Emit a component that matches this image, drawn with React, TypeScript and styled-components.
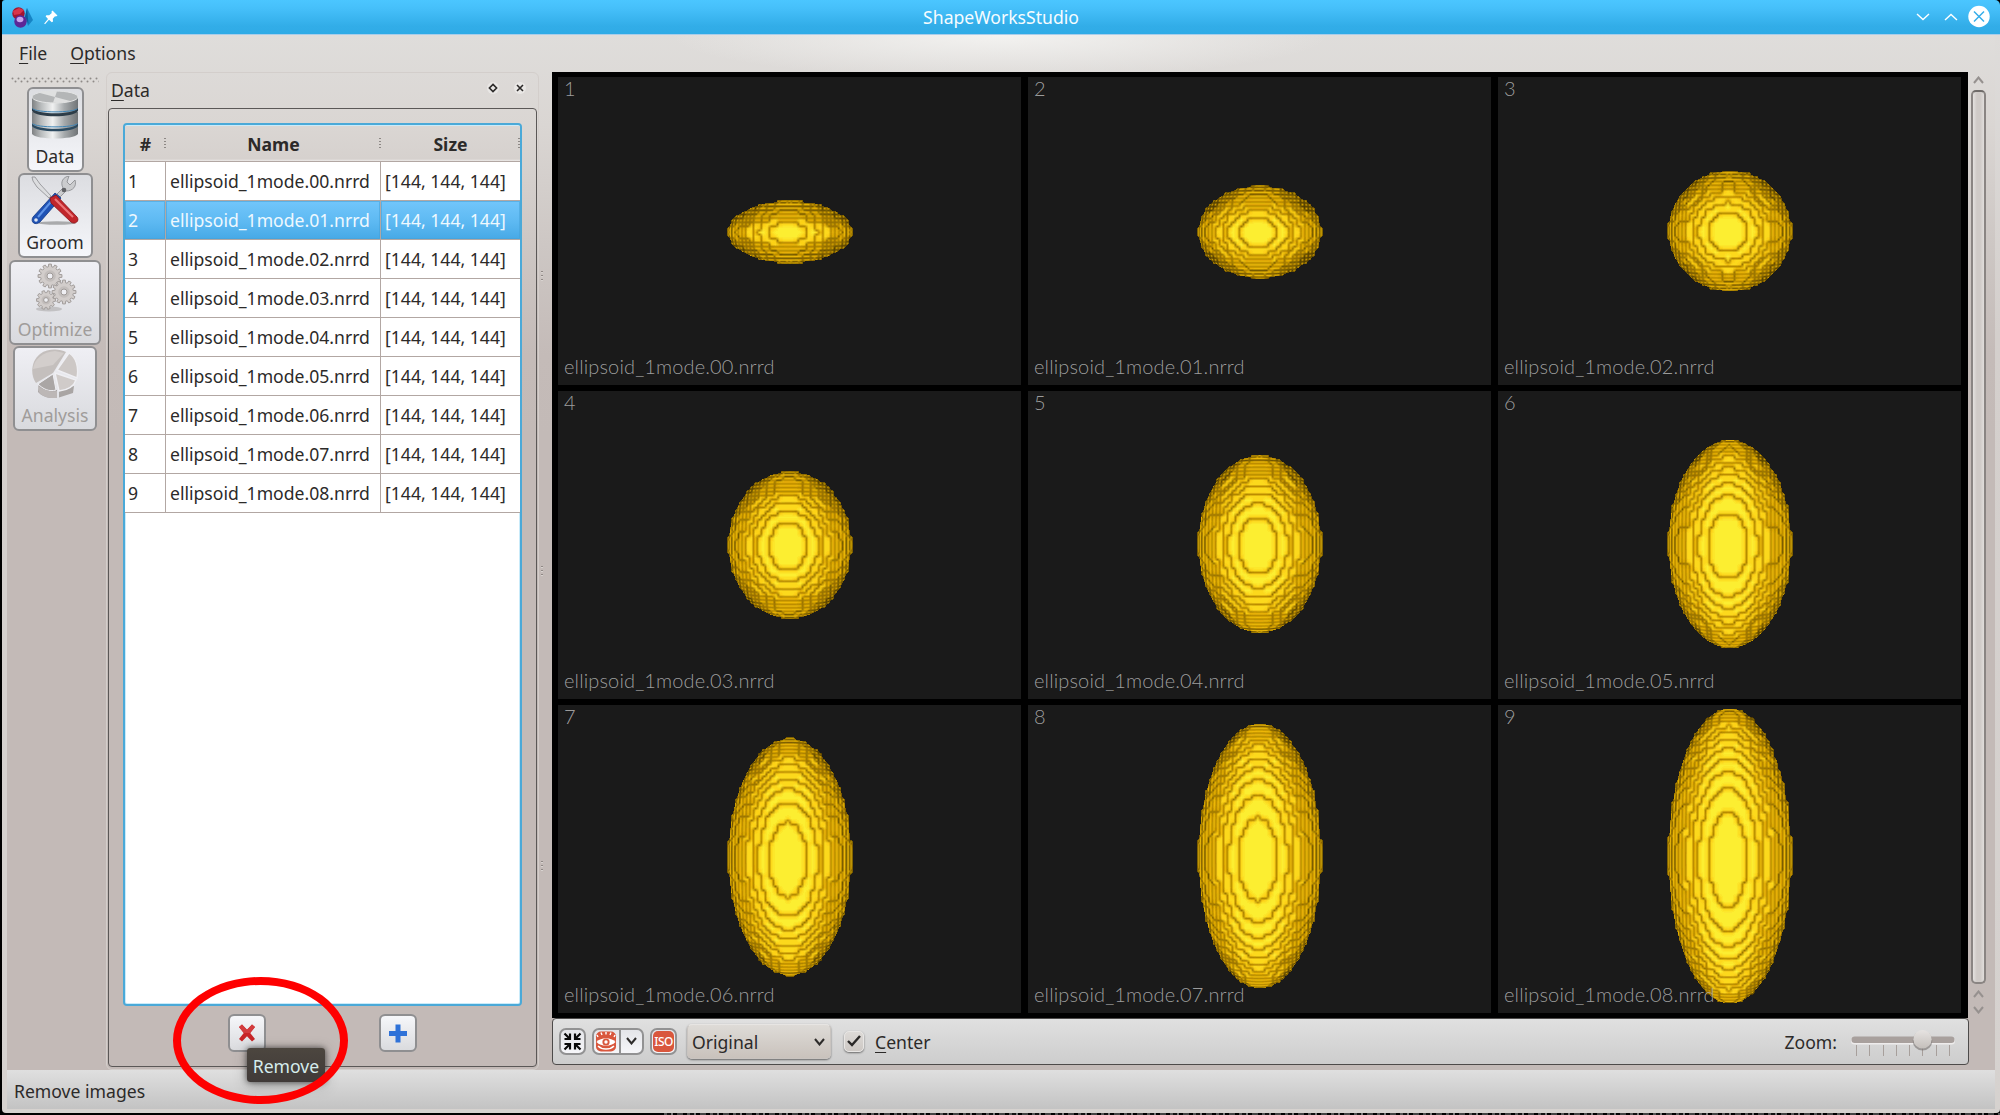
import React from "react";
import styled, { createGlobalStyle } from "styled-components";

const Global = createGlobalStyle`
  * { box-sizing: border-box; }
  html, body { margin: 0; padding: 0; background: #000; }
  body { width: 2000px; height: 1115px; overflow: hidden; font-family: "Noto Sans", "Open Sans", sans-serif; font-size: 17.6px; color: #2c2a29; }
`;

/* ---------- voxel ellipsoid rendering ---------- */

const RADIUS = 16.15;
const Z_OFFSET = 0.45;
const VOXEL = 3.8;

type RGB = [number, number, number];

function shade(gx: number, gy: number, gz: number): RGB {
  const len = Math.hypot(gx, gy, gz) || 1;
  const nz = Math.max(0.25, gz / len);
  const spec = Math.pow(Math.max(0, 2 * nz * nz - 1), 5);
  return [Math.min(255, 260 * nz), Math.min(255, 196 * nz + 43 * spec), 50 * spec];
}

function voxelPaths(b: number, lift: number) {
  const inside = (i: number, j: number, k: number) => {
    const z = k + Z_OFFSET;
    return (i * i + z * z) / (RADIUS * RADIUS) + (j * j) / (b * b) <= 1 ? 1 : 0;
  };
  const W = 19;
  const H = Math.ceil(b) + 3;
  const cols = 2 * W + 1;
  const heights: number[] = [];
  for (let j = -H; j <= H; j++) {
    for (let i = -W; i <= W; i++) {
      let k = 18;
      while (k > -3 && !inside(i, j, k)) k--;
      heights.push(k > -3 ? k : -99);
    }
  }
  const hAt = (i: number, j: number) =>
    Math.abs(i) > W || Math.abs(j) > H ? -99 : heights[(j + H) * cols + i + W];
  const grad = (i: number, j: number, k: number): RGB => [
    inside(i - 1, j, k) - inside(i + 1, j, k),
    inside(i, j - 1, k) - inside(i, j + 1, k),
    inside(i, j, k - 1) - inside(i, j, k + 1),
  ];
  const mix = (p: RGB, q: RGB, side = 1): RGB =>
    shade((p[0] + q[0]) * side, (p[1] + q[1]) * side, p[2] + q[2]);
  const avg = (list: RGB[]): RGB => {
    const s: RGB = [0, 0, 0];
    list.forEach((c) => { s[0] += c[0]; s[1] += c[1]; s[2] += c[2]; });
    return [s[0] / list.length, s[1] / list.length, s[2] / list.length];
  };
  const top = (i: number, j: number): RGB | null => {
    const h = hAt(i, j);
    return h < -50 ? null : mix(grad(i, j, h), grad(i, j, h + 1), 0.46);
  };
  const edge = (i: number, j: number, i2: number, j2: number): RGB | null => {
    const a = hAt(i, j);
    const c = hAt(i2, j2);
    if (a < -50 && c < -50) return null;
    if (a === c) return avg([top(i, j)!, top(i2, j2)!]);
    const hi = Math.max(a, c);
    const lo = Math.min(a, c);
    const upper = mix(grad(i, j, hi), grad(i2, j2, hi));
    if (lo < -50) return upper;
    return avg([upper, mix(grad(i, j, lo + 1), grad(i2, j2, lo + 1))]);
  };
  // middle of a cell: keeps straight steps solid and cuts lone corners diagonally
  const center = (i: number, j: number): RGB | null => {
    const sides: number[][] = [
      [i, j, i + 1, j], [i, j + 1, i + 1, j + 1], [i, j, i, j + 1], [i + 1, j, i + 1, j + 1],
    ];
    const stepped = sides.filter(([a, c, d, e]) => hAt(a, c) !== hAt(d, e));
    const pick = (list: number[][]) => list.map(([a, c, d, e]) => edge(a, c, d, e)).filter(Boolean) as RGB[];
    const dark = pick(stepped);
    const flat = pick(sides.filter((s) => !stepped.includes(s)));
    if (!dark.length) return flat.length ? avg(flat) : null;
    if (!flat.length) return avg(dark);
    const parallel = stepped.length === 2 &&
      (hAt(i, j) === hAt(i + 1, j)) === (hAt(i, j + 1) === hAt(i + 1, j + 1));
    return parallel ? avg(dark) : avg([avg(dark), avg(flat)]);
  };
  // node grid at half-voxel resolution
  const cache = new Map<number, RGB | null>();
  const node = (u: number, v: number): RGB | null => {
    const key = (v + 400) * 1000 + u + 400;
    if (cache.has(key)) return cache.get(key)!;
    const i = Math.floor(u / 2);
    const j = Math.floor(v / 2);
    const ox = u - 2 * i;
    const oy = v - 2 * j;
    let r: RGB | null;
    if (!ox && !oy) r = top(i, j);
    else if (!oy) r = edge(i, j, i + 1, j);
    else if (!ox) r = edge(i, j, i, j + 1);
    else r = center(i, j);
    cache.set(key, r);
    return r;
  };

  const halfH = Math.ceil((b + 2) * VOXEL);
  const paths = new Map<string, string>();
  for (let y = -halfH; y <= halfH; y++) {
    let runKey = "";
    let runStart = 0;
    for (let x = -68; x <= 68; x++) {
      let key = "";
      if (x < 68) {
        let z = 0;
        let u = 0;
        let v = 0;
        for (let n = 0; n < 5; n++) {
          const s = VOXEL * (1 + 0.09 * z);
          u = (x + 0.5 + 2.2 * z) / s;
          v = (y + 0.5 - lift * z) / s;
          z = Math.sqrt(Math.max(0, 1 - (u * u) / (RADIUS * RADIUS) - (v * v) / (b * b)));
        }
        const i = Math.floor(u);
        const j = Math.floor(v);
        const fx = u - i;
        const fy = v - j;
        const on = (p: number, q: number) => (hAt(p, q) > -50 ? 1 : 0);
        const cover =
          on(i, j) * (1 - fx) * (1 - fy) + on(i + 1, j) * fx * (1 - fy) +
          on(i, j + 1) * (1 - fx) * fy + on(i + 1, j + 1) * fx * fy;
        if (cover > 0.5) {
          const U = Math.floor(u * 2);
          const V = Math.floor(v * 2);
          const tx = u * 2 - U;
          const ty = v * 2 - V;
          const acc: RGB = [0, 0, 0];
          let wsum = 0;
          ([[0, 0, (1 - tx) * (1 - ty)], [1, 0, tx * (1 - ty)], [0, 1, (1 - tx) * ty], [1, 1, tx * ty]] as RGB[])
            .forEach(([dx, dy, w]) => {
              const c = node(U + dx, V + dy);
              if (c) {
                acc[0] += c[0] * w; acc[1] += c[1] * w; acc[2] += c[2] * w;
                wsum += w;
              }
            });
          const q = (n: number) => Math.min(255, Math.round(n / (wsum || 1) / 7) * 7);
          key = `rgb(${q(acc[0])},${q(acc[1])},${q(acc[2])})`;
        }
      }
      if (key !== runKey) {
        if (runKey) {
          paths.set(runKey, (paths.get(runKey) || "") + `M${runStart} ${y}h${x - runStart}v1h${runStart - x}z`);
        }
        runKey = key;
        runStart = x;
      }
    }
  }
  return Array.from(paths.entries());
}

const Scene = styled.svg`
  display: block;
  width: 100%;
  height: 100%;
  shape-rendering: crispEdges;
`;

const Ellipsoid = ({ b, lift, cy }: { b: number; lift: number; cy: number }) => {
  const paths = React.useMemo(() => voxelPaths(b, lift), [b, lift]);
  return (
    <Scene viewBox="0 0 463 308">
      <g transform={`translate(232 ${cy})`}>
        {paths.map(([fill, d]) => <path key={fill} d={d} fill={fill} />)}
      </g>
    </Scene>
  );
};

/* ---------- window frame ---------- */

const Window = styled.div`
  width: 2000px;
  height: 1115px;
  padding-left: 2px;
  display: flex;
  flex-direction: column;
  position: relative;
  overflow: hidden;
`;
const TitleBar = styled.header`
  height: 35px;
  flex: none;
  display: grid;
  grid-template-columns: 120px 1fr 120px;
  align-items: center;
  background: linear-gradient(#4bc6ff 0, #46c0fa 8px, #32ade8 26px, #2fabe6 34px);
  border-bottom: 1px solid #a9cdea;
  border-radius: 3px 5px 0 0;
`;
const TitleIcons = styled.div`
  display: flex;
  align-items: center;
  gap: 11px;
  padding-left: 10px;
  svg { display: block; }
`;
const Title = styled.div`
  color: #f6fcff;
  text-align: center;
  line-height: 34px;
`;
const WindowButtons = styled.div`
  display: flex;
  justify-content: flex-end;
  align-items: center;
  padding-right: 9px;
`;
const Frame = styled.div`
  flex: none;
  height: 1078px;
  padding: 0 5px 4px;
  background: linear-gradient(#dedcda, #d4cfcc 300px, #d6d2cf);
  border-radius: 0 0 4px 4px;
`;
const Body = styled.div`
  height: 1074px;
  display: flex;
  flex-direction: column;
  background:
    radial-gradient(ellipse 330px 44px at 993px 0, #f3f2f0 0, rgba(240,239,237,.75) 35%, rgba(226,224,222,0) 100%),
    linear-gradient(#dfdddb 0, #dad6d3 90px, #cdc7c4 210px, #c4bbb8 320px, #c3bab7 400px);
`;
const MenuBar = styled.nav`
  height: 37px;
  flex: none;
  display: flex;
  gap: 23px;
  padding: 7px 0 0 12px;
  line-height: 23px;
`;
const Mnemonic = styled.span`
  text-decoration: underline;
  text-decoration-thickness: 1px;
  text-underline-offset: 3px;
`;
const Main = styled.div`
  height: 998px;
  flex: none;
  display: flex;
`;

/* ---------- left tool bar ---------- */

const ToolColumn = styled.aside`
  width: 99px;
  flex: none;
  display: flex;
  flex-direction: column;
  align-items: center;
  padding: 5px 3px 0 0;
`;
const Handle = styled.svg`
  display: block;
  width: 88px;
  height: 7px;
  margin-bottom: 3px;
  flex: none;
`;
const ToolButton = styled.button<{ $w: number; $off?: boolean }>`
  width: ${(p) => p.$w}px;
  height: 85px;
  margin: 0 0 1.3px;
  padding: 1px 0 0;
  flex: none;
  display: flex;
  flex-direction: column;
  align-items: center;
  border: 2px solid #8f8f91;
  border-radius: 6px;
  background: ${(p) => (p.$off ? "linear-gradient(#efeff4, #d9dade)" : "linear-gradient(#dcdde1, #f5f6fa)")};
  color: ${(p) => (p.$off ? "#a09c9a" : "#2c2a29")};
  font: inherit;
  line-height: 24px;
  white-space: nowrap;
  svg { display: block; flex: none; margin-bottom: 5px; }
`;

/* ---------- data dock ---------- */

const Dock = styled.section`
  width: 433px;
  height: 998px;
  flex: none;
  display: flex;
  flex-direction: column;
  border: 1px solid #d3cecb;
  border-radius: 6px;
  padding: 0 1px 2px;
`;
const DockTitle = styled.div`
  height: 35px;
  flex: none;
  display: flex;
  align-items: center;
  justify-content: space-between;
  padding: 0 11px 1px 3px;
`;
const DockButtons = styled.div`
  display: flex;
  gap: 15px;
  padding-bottom: 4px;
`;
const DockButton = styled.div`
  width: 12px;
  height: 12px;
  border-radius: 50%;
  background: #e9e7e5;
  svg { display: block; }
`;
const DockBody = styled.div`
  flex: 1;
  display: flex;
  flex-direction: column;
  border: 1px solid #5b5857;
  border-radius: 4px;
  padding: 14px 14px 0;
`;
const Table = styled.div`
  height: 883px;
  flex: none;
  border: 2px solid #4aa9d8;
  border-radius: 4px;
  overflow: hidden;
  background: #fff;
  box-shadow: inset 0 0 0 1px #c9ebfa;
  padding: 1px 0;
`;
const HeaderRow = styled.div`
  height: 36px;
  display: grid;
  grid-template-columns: 41px 215px 1fr;
  background: linear-gradient(#dad6d3, #d6d1ce 33px, #eceae8);
  border-bottom: 1px solid #b2a7a3;
  font-weight: 700;
`;
const HeaderCell = styled.div`
  position: relative;
  text-align: center;
  line-height: 36px;
  &::after {
    content: "";
    position: absolute;
    right: 0;
    top: 12px;
    width: 2px;
    height: 12px;
    background: repeating-linear-gradient(#8d8885 0 1px, transparent 1px 3px);
  }
`;
const Row = styled.div`
  height: 39px;
  display: grid;
  grid-template-columns: 41px 215px 1fr;
`;
const Cell = styled.div<{ $on?: boolean; $pad?: number }>`
  height: 39px;
  padding-left: ${(p) => p.$pad ?? 4}px;
  line-height: 37px;
  padding-top: 1px;
  white-space: nowrap;
  border-bottom: 1px solid #b2a7a3;
  border-right: 1px solid #b2a7a3;
  color: ${(p) => (p.$on ? "#eef8fe" : "#2c2a29")};
  background: ${(p) => (p.$on ? "linear-gradient(#72c6fb, #5db9f2 55%, #47a9e6)" : "#fff")};
  box-shadow: ${(p) => (p.$on ? "inset 0 0 0 1px rgba(70,160,215,.55)" : "none")};
  &:last-child { border-right: 0; }
`;
const ButtonRow = styled.div`
  display: flex;
  gap: 113px;
  padding: 8px 0 0 105px;
`;
const SmallButton = styled.button`
  width: 38px;
  height: 38px;
  padding: 0;
  display: flex;
  align-items: center;
  justify-content: center;
  border: 2px solid #8f8f91;
  border-radius: 6px;
  background: linear-gradient(#f6f7fa, #dadbde);
`;
const Splitter = styled.div`
  width: 13px;
  flex: none;
  display: flex;
  flex-direction: column;
  gap: 285px;
  padding: 199px 0 0 2px;
`;
const Grip = styled.div`
  width: 2px;
  height: 10px;
  background: repeating-linear-gradient(#8f8885 0 1px, #d8d3d0 1px 2px, transparent 2px 4px);
`;

/* ---------- viewer ---------- */

const ViewerColumn = styled.main`
  width: 1417px;
  flex: none;
`;
const Viewer = styled.div`
  height: 946px;
  width: 1416px;
  background: #000;
  display: grid;
  grid-template-columns: repeat(3, 463px);
  grid-template-rows: repeat(3, 308px);
  gap: 6px 7px;
  padding: 5px 7px 5px 6px;
`;
const Tile = styled.div`
  position: relative;
  background: #1a1a1a;
  overflow: hidden;
  color: rgba(180, 180, 180, .86);
  font-family: "Lato", "Noto Sans", sans-serif;
  font-weight: 300;
  font-size: 20px;
  line-height: 24px;
`;
const TileNumber = styled.span`
  position: absolute;
  left: 6px;
  top: -1px;
`;
const TileName = styled.span`
  position: absolute;
  left: 6px;
  bottom: 7px;
  white-space: nowrap;
  letter-spacing: .14px;
`;
const ViewBar = styled.div`
  height: 47px;
  display: flex;
  align-items: center;
  border: 1px solid #4d4b4a;
  border-radius: 4px;
  background: linear-gradient(#e0e0e0, #cdcdcd);
  padding: 0 13px 0 6px;
`;
const IconButton = styled.div<{ $w: number }>`
  width: ${(p) => p.$w}px;
  height: 27px;
  flex: none;
  display: flex;
  align-items: center;
  border: 2px solid #929293;
  border-radius: 7px;
  background: linear-gradient(#e4e5e9, #f6f6f9);
  overflow: hidden;
  margin-right: 6px;
  margin-top: -1px;
  svg { display: block; flex: none; }
`;
const MenuHalf = styled.div`
  flex: 1;
  height: 23px;
  display: flex;
  align-items: center;
  justify-content: center;
  border-left: 2px solid #929293;
`;
const IsoBadge = styled.div`
  width: 21px;
  height: 21px;
  margin: auto;
  border-radius: 5px;
  background: #d9573d;
  color: #fff;
  font: 500 12px/21px "Noto Sans", sans-serif;
  letter-spacing: -.6px;
  text-align: center;
`;
const Combo = styled.div`
  width: 144px;
  height: 35px;
  margin-left: 4px;
  flex: none;
  display: flex;
  align-items: center;
  justify-content: space-between;
  padding: 2px 5px 1px 4px;
  border-radius: 5px;
  border: 1px solid #c9c4c0;
  border-top-color: #e7e5e3;
  background: linear-gradient(#dedbd7, #c9c2bc);
  box-shadow: 0 1px 2px rgba(0,0,0,.5);
`;
const CheckBox = styled.div`
  width: 20px;
  height: 21px;
  flex: none;
  margin: -1px 11px 0 13px;
  display: flex;
  align-items: center;
  justify-content: center;
  border-radius: 5px;
  border: 1px solid #e8e6e4;
  background: linear-gradient(#dddad7, #cdc8c4);
  box-shadow: 0 1px 2px rgba(0,0,0,.5);
`;
const BarText = styled.span`
  padding-top: 1px;
`;
const ZoomBox = styled.div`
  margin-left: auto;
  display: flex;
  align-items: center;
  gap: 14px;
`;
const ScrollColumn = styled.div`
  width: 15px;
  height: 946px;
  margin-left: 2px;
  flex: none;
  display: flex;
  flex-direction: column;
  align-items: center;
  padding-top: 4px;
  svg { display: block; flex: none; }
`;
const ScrollThumb = styled.div`
  width: 15px;
  height: 894px;
  flex: none;
  margin: 6px 0 6px;
  border: 2px solid #8a8583;
  border-top-color: #6f6b69;
  border-radius: 5px;
  background: linear-gradient(90deg, #e4e1df, #cfcac7 35%, #cfcac7 65%, #e1dedc);
`;
const StatusBar = styled.footer`
  height: 39px;
  flex: none;
  display: flex;
  align-items: center;
  padding: 3px 0 0 7px;
  background: linear-gradient(#dfdfdf, #c3c3c3);
`;
const Behind = styled.div`
  height: 2px;
  flex: none;
  margin-left: 662px;
  background: repeating-linear-gradient(90deg, #555 0 3px, #111 3px 7px, #777 7px 9px, #000 9px 13px, #444 13px 19px, #000 19px 23px);
`;
const Tooltip = styled.div`
  position: absolute;
  left: 247px;
  top: 1048px;
  width: 78px;
  height: 34px;
  border-radius: 3px;
  background: linear-gradient(#4c463f, #403a38);
  box-shadow: 0 0 6px rgba(0,0,0,.6), 0 3px 14px rgba(70,70,70,.35);
  color: #d5ecec;
  line-height: 36px;
  text-align: center;
`;
const Annotation = styled.div`
  position: absolute;
  left: 173px;
  top: 977px;
  width: 175px;
  height: 127px;
  border: 8px solid #fe0000;
  border-radius: 50%;
`;

/* ---------- icons ---------- */

const AppIcon = () => (
  <svg width="21" height="21" viewBox="0 0 21 21">
    <path d="M15 1 21 13 16 19 13 10z" fill="#1683c4" />
    <path d="M15 1 16.5 17 13 10z" fill="#0b5c9a" />
    <circle cx="6.5" cy="6.5" r="6.2" fill="#a3142f" />
    <path d="M1 4 7 1l5 2-4 4-6 1z" fill="#d8344a" />
    <circle cx="8.5" cy="14.5" r="6.2" fill="#5c2797" />
    <ellipse cx="8" cy="12.5" rx="3.4" ry="2.8" fill="#c9a4ee" />
  </svg>
);
const PinIcon = () => (
  <svg width="14" height="15" viewBox="0 0 14 15" fill="#fff">
    <path d="M8.5.5 13.5 5.5 12 6.5 11 6.2 8.8 8.8 9 11.5 7.8 12.3 5 9.8 1 14.2.2 13.6 4 9 1.6 6.3 2.4 5.2 5.2 5.3 7.8 3 7.4 1.8z" />
  </svg>
);
const Chevron = ({ w = 13, h = 7, up, color = "#2e2c2b", sw = 2 }: { w?: number; h?: number; up?: boolean; color?: string; sw?: number }) => (
  <svg width={w + 2} height={h + 2} viewBox={`-1 -1 ${w + 2} ${h + 2}`} fill="none" stroke={color} strokeWidth={sw}>
    <path d={up ? `M0 ${h}L${w / 2} 0.5L${w} ${h}` : `M0 0L${w / 2} ${h - 0.5}L${w} 0`} />
  </svg>
);
const CloseIcon = () => (
  <svg width="24" height="24" viewBox="0 0 24 24">
    <circle cx="12" cy="11.5" r="10.7" fill="#fff" />
    <path d="M7 6.5 17 16.5M17 6.5 7 16.5" stroke="#35aeea" strokeWidth="1.5" />
  </svg>
);
const DatabaseIcon = () => (
  <svg width="48" height="49" viewBox="0 0 48 49">
    <defs>
      <linearGradient id="metal" x1="0" x2="1" y1="0" y2="0">
        <stop offset="0" stopColor="#7e8183" /><stop offset=".2" stopColor="#b9bcbd" />
        <stop offset=".45" stopColor="#f0f1f1" /><stop offset=".7" stopColor="#a6aaac" /><stop offset="1" stopColor="#707477" />
      </linearGradient>
    </defs>
    <path d="M1 36V44C5 50 43 50 47 44V36z" fill="url(#metal)" />
    <path d="M1 36C5 43 43 43 47 36V33H1z" fill="#2c4a60" />
    <path d="M1 22V33.5C5 40.5 43 40.5 47 33.5V22z" fill="url(#metal)" />
    <path d="M1.5 33.5C5 38 43 38 46.5 33.5" fill="none" stroke="#3f86b8" />
    <path d="M1 21C5 28 43 28 47 21V17H1z" fill="#2c3c48" />
    <path d="M1 7V18C5 25 43 25 47 18V7z" fill="url(#metal)" />
    <path d="M1.5 18.5C5 23 43 23 46.5 18.5" fill="none" stroke="#3f86b8" />
    <ellipse cx="24" cy="7" rx="23" ry="6" fill="#b4b6b7" stroke="#e3e4e4" />
    <path d="M24 7 8 2.8C14 1 22 1 26 1.2zM24 7 40 11.3C34 13 26 13 22 12.8z" fill="#dfe0e0" />
  </svg>
);
const ToolsIcon = () => (
  <svg width="48" height="49" viewBox="0 0 48 49">
    <ellipse cx="26" cy="47" rx="19" ry="1.8" fill="#a9aaac" />
    <path d="M1 1 4 1 9 8 20 20 18 22 6 11 2 5z" fill="#dcdddf" stroke="#8b8c8f" strokeWidth=".8" />
    <path d="M26 18 32 12C29 6 32 1 38 0L36 6 39 9 44 4C46 10 42 15 35 15L29 21z" fill="#cbccce" stroke="#87888b" strokeWidth=".8" />
    <circle cx="33" cy="14" r="2.3" fill="#616265" />
    <path d="M24 17 30 22 9 46C4 50-1 46 2 41z" fill="#1f52b4" stroke="#123785" strokeWidth=".8" />
    <path d="M24 21 7 41" stroke="#5f93e6" strokeWidth="2" />
    <circle cx="5" cy="44" r="1.8" fill="#dfe5f2" />
    <path d="M19 22 25 19 46 41C49 45 44 49 40 46L20 27z" fill="#c1262b" stroke="#8a1216" strokeWidth=".8" />
    <path d="M24 23 42 41" stroke="#ec7678" strokeWidth="2.2" />
  </svg>
);
const gearPath = (cx: number, cy: number, r: number, teeth: number) => {
  const pts: string[] = [];
  for (let t = 0; t < teeth; t++) {
    [[-0.32, 0.78], [-0.22, 1], [0.22, 1], [0.32, 0.78]].forEach(([o, k]) => {
      const a = ((t + o) / teeth) * Math.PI * 2;
      pts.push(`${(cx + Math.cos(a) * r * k).toFixed(2)} ${(cy + Math.sin(a) * r * k).toFixed(2)}`);
    });
  }
  return `M${pts.join("L")}z`;
};
const GearsIcon = () => (
  <svg width="48" height="49" viewBox="0 0 48 49">
    <ellipse cx="18" cy="46" rx="13" ry="2.5" fill="#c2c1c3" />
    {[[19, 13, 12, 12], [33, 29, 12, 12], [15, 37, 9.5, 10]].map(([x, y, r, n]) => (
      <g key={x}>
        <path d={gearPath(x, y, r, n)} fill="#d2cdcb" stroke="#a39e9c" />
        <circle cx={x} cy={y} r={r * 0.48} fill="#c3bebc" />
        <circle cx={x} cy={y} r={r * 0.25} fill="#efeff3" stroke="#9f9a98" />
      </g>
    ))}
  </svg>
);
const PieIcon = () => (
  <svg width="48" height="49" viewBox="0 0 48 49">
    <path d="M8 35 7 43C11 48 20 50 26 49L26 41zM28 41V48.5L42 44 43 37z" fill="#a9a5a4" />
    <path d="M22 24 5 34C-1 26 0 12 9 5 17-1 29 0 35 3z" fill="#c4bfbd" />
    <path d="M2 20C3 10 12 3 24 2L33 4 22 16z" fill="#d3cecc" />
    <path d="M26 21 38 4C45 8 48 18 46 29z" fill="#cdc8c6" stroke="#efeff3" strokeWidth="1.4" />
    <path d="M22 25 25 41C18 43 12 40 7 35z" fill="#aaa6a5" stroke="#efeff3" />
    <path d="M24 24 45 31C43 37 37 41 28 42z" fill="#d0cbc9" stroke="#efeff3" strokeWidth="1.4" />
    <path d="M7 36C11 41 19 43 26 42V49C18 50 10 47 8 43z" fill="#bcb7b6" />
  </svg>
);
const RemoveIcon = () => (
  <svg width="18" height="18" viewBox="0 0 18 18">
    <path d="M1 3 4 .6 9 5.7 14 .6 17 3 12.2 9 17 15 14 17.5 9 12.3 4 17.5 1 15 5.8 9z" fill="#c72527" />
    <path d="M1 3 4 .6 9 5.7 14 .6 17 3 12.2 9H5.8z" fill="#d33c3e" />
  </svg>
);
const AddIcon = () => (
  <svg width="18" height="19" viewBox="0 0 18 19">
    <path d="M6.5.5h5v6.5H18v5h-6.5v6.5h-5V12H0V7h6.5z" fill="#2f72d8" />
  </svg>
);
const ShrinkIcon = () => (
  <svg width="23" height="23" viewBox="0 0 23 23" fill="none" stroke="#0a0a0a" strokeWidth="2.2">
    <path d="M3.5 3.5 8 8M19.5 3.5 15 8M3.5 19.5 8 15M19.5 19.5 15 15" />
    <path d="M9 3.5V9H3.5M14 3.5V9H19.5M9 19.5V14H3.5M14 19.5V14H19.5" />
  </svg>
);
const EyeIcon = () => (
  <svg width="25" height="23" viewBox="0 0 25 23">
    <rect x="2" y="1.5" width="20" height="20" rx="5" fill="#d9573d" />
    <path d="M2.5 12C7 7 17 7 21.5 12 17 17 7 17 2.5 12z" fill="#fff" />
    <circle cx="12" cy="12" r="3.6" fill="#d9573d" /><circle cx="12" cy="12" r="1.7" fill="#fff" />
    <path d="M4 7 3 5M8 5 7 2.5M12 4.5V2M16 5 17 2.5M20 7 21 5M4 16C8 20 16 20 20 16" stroke="#fff" strokeWidth="1.4" fill="none" />
  </svg>
);
const CheckIcon = () => (
  <svg width="14" height="12" viewBox="0 0 14 12" fill="none" stroke="#2a2827" strokeWidth="2.4">
    <path d="M1 6 5 10 13 1" />
  </svg>
);
const TICKS = [6, 19, 33, 46, 59, 72, 86, 99];
const Slider = () => (
  <svg width="104" height="30" viewBox="0 0 104 30">
    <defs>
      <linearGradient id="knob" x1="0" x2="0" y1="0" y2="1">
        <stop offset="0" stopColor="#e6e3e1" /><stop offset="1" stopColor="#c4bfbb" />
      </linearGradient>
    </defs>
    {TICKS.map((x) => <path key={x} d={`M${x - 0.5} 18v11`} stroke="#a79f9b" />)}
    <rect x="0" y="10.5" width="104" height="7" rx="3.5" fill="#eeecec" />
    <rect x="0.5" y="9.5" width="103" height="6.5" rx="3.2" fill="#a8a09d" />
    <circle cx="71.5" cy="13.8" r="9.8" fill="#75706e" opacity=".6" />
    <circle cx="71.5" cy="12.3" r="9.2" fill="url(#knob)" />
  </svg>
);

/* ---------- data ---------- */

const SHAPES = [
  { b: 8.2, lift: 0.5, cy: 155 }, { b: 12.1, lift: 0.6, cy: 155 }, { b: 15.8, lift: 0.9, cy: 154 },
  { b: 19.3, lift: 1.5, cy: 154 }, { b: 23.3, lift: 1.8, cy: 153 }, { b: 27.3, lift: 2.2, cy: 153 },
  { b: 31.1, lift: 2.8, cy: 152 }, { b: 34.8, lift: 3.4, cy: 151 }, { b: 38.8, lift: 4, cy: 151 },
];

export default function App() {
  return (
    <>
      <Global />
      <Window>
        <TitleBar>
          <TitleIcons><AppIcon /><PinIcon /></TitleIcons>
          <Title>ShapeWorksStudio</Title>
          <WindowButtons>
            <Chevron w={12} h={6} color="#fff" sw={1.4} />
            <span style={{ width: 14 }} />
            <Chevron w={12} h={6} up color="#fff" sw={1.4} />
            <span style={{ width: 9 }} />
            <CloseIcon />
          </WindowButtons>
        </TitleBar>
        <Frame>
          <Body>
            <MenuBar>
              <span><Mnemonic>F</Mnemonic>ile</span>
              <span><Mnemonic>O</Mnemonic>ptions</span>
            </MenuBar>
            <Main>
              <ToolColumn>
                <Handle viewBox="0 0 88 7">
                  {Array.from({ length: 15 }, (_, i) => (
                    <g key={i}>
                      <circle cx={1.5 + i * 6} cy="1.5" r="1" fill="#8f8a87" />
                      <circle cx={4.5 + i * 6} cy="4.5" r="1" fill="#8f8a87" />
                    </g>
                  ))}
                </Handle>
                <ToolButton $w={57}><DatabaseIcon />Data</ToolButton>
                <ToolButton $w={75}><ToolsIcon />Groom</ToolButton>
                <ToolButton $w={92} $off><GearsIcon />Optimize</ToolButton>
                <ToolButton $w={84} $off><PieIcon />Analysis</ToolButton>
              </ToolColumn>
              <Dock>
                <DockTitle>
                  <span><Mnemonic>D</Mnemonic>ata</span>
                  <DockButtons>
                    <DockButton>
                      <svg width="12" height="12" viewBox="0 0 12 12"><path d="M6 2.4 9.6 6 6 9.6 2.4 6z" fill="none" stroke="#2c2a29" strokeWidth="1.6" /></svg>
                    </DockButton>
                    <DockButton>
                      <svg width="12" height="12" viewBox="0 0 12 12"><path d="M3 3 9 9M9 3 3 9" stroke="#2c2a29" strokeWidth="1.6" /></svg>
                    </DockButton>
                  </DockButtons>
                </DockTitle>
                <DockBody>
                  <Table>
                    <HeaderRow>
                      <HeaderCell>#</HeaderCell>
                      <HeaderCell>Name</HeaderCell>
                      <HeaderCell>Size</HeaderCell>
                    </HeaderRow>
                    {SHAPES.map((_, i) => (
                      <Row key={i}>
                        <Cell $on={i === 1} $pad={3}>{i + 1}</Cell>
                        <Cell $on={i === 1}>{`ellipsoid_1mode.0${i}.nrrd`}</Cell>
                        <Cell $on={i === 1}>[144, 144, 144]</Cell>
                      </Row>
                    ))}
                  </Table>
                  <ButtonRow>
                    <SmallButton><RemoveIcon /></SmallButton>
                    <SmallButton><AddIcon /></SmallButton>
                  </ButtonRow>
                </DockBody>
              </Dock>
              <Splitter><Grip /><Grip /><Grip /></Splitter>
              <ViewerColumn>
                <Viewer>
                  {SHAPES.map((s, i) => (
                    <Tile key={i}>
                      <Ellipsoid {...s} />
                      <TileNumber>{i + 1}</TileNumber>
                      <TileName>{`ellipsoid_1mode.0${i}.nrrd`}</TileName>
                    </Tile>
                  ))}
                </Viewer>
                <ViewBar>
                  <IconButton $w={27}><ShrinkIcon /></IconButton>
                  <IconButton $w={52}>
                    <EyeIcon />
                    <MenuHalf><Chevron w={9} h={6} /></MenuHalf>
                  </IconButton>
                  <IconButton $w={27}><IsoBadge>ISO</IsoBadge></IconButton>
                  <Combo>Original<Chevron w={9} h={6} /></Combo>
                  <CheckBox><CheckIcon /></CheckBox>
                  <BarText><Mnemonic>C</Mnemonic>enter</BarText>
                  <ZoomBox><BarText>Zoom:</BarText><Slider /></ZoomBox>
                </ViewBar>
              </ViewerColumn>
              <ScrollColumn>
                <Chevron w={9} h={6} up color="#96918f" />
                <ScrollThumb />
                <Chevron w={9} h={6} up color="#96918f" />
                <span style={{ height: 8 }} />
                <Chevron w={9} h={6} color="#96918f" />
              </ScrollColumn>
            </Main>
            <StatusBar>Remove images</StatusBar>
          </Body>
        </Frame>
        <Behind />
        <Tooltip>Remove</Tooltip>
        <Annotation />
      </Window>
    </>
  );
}
